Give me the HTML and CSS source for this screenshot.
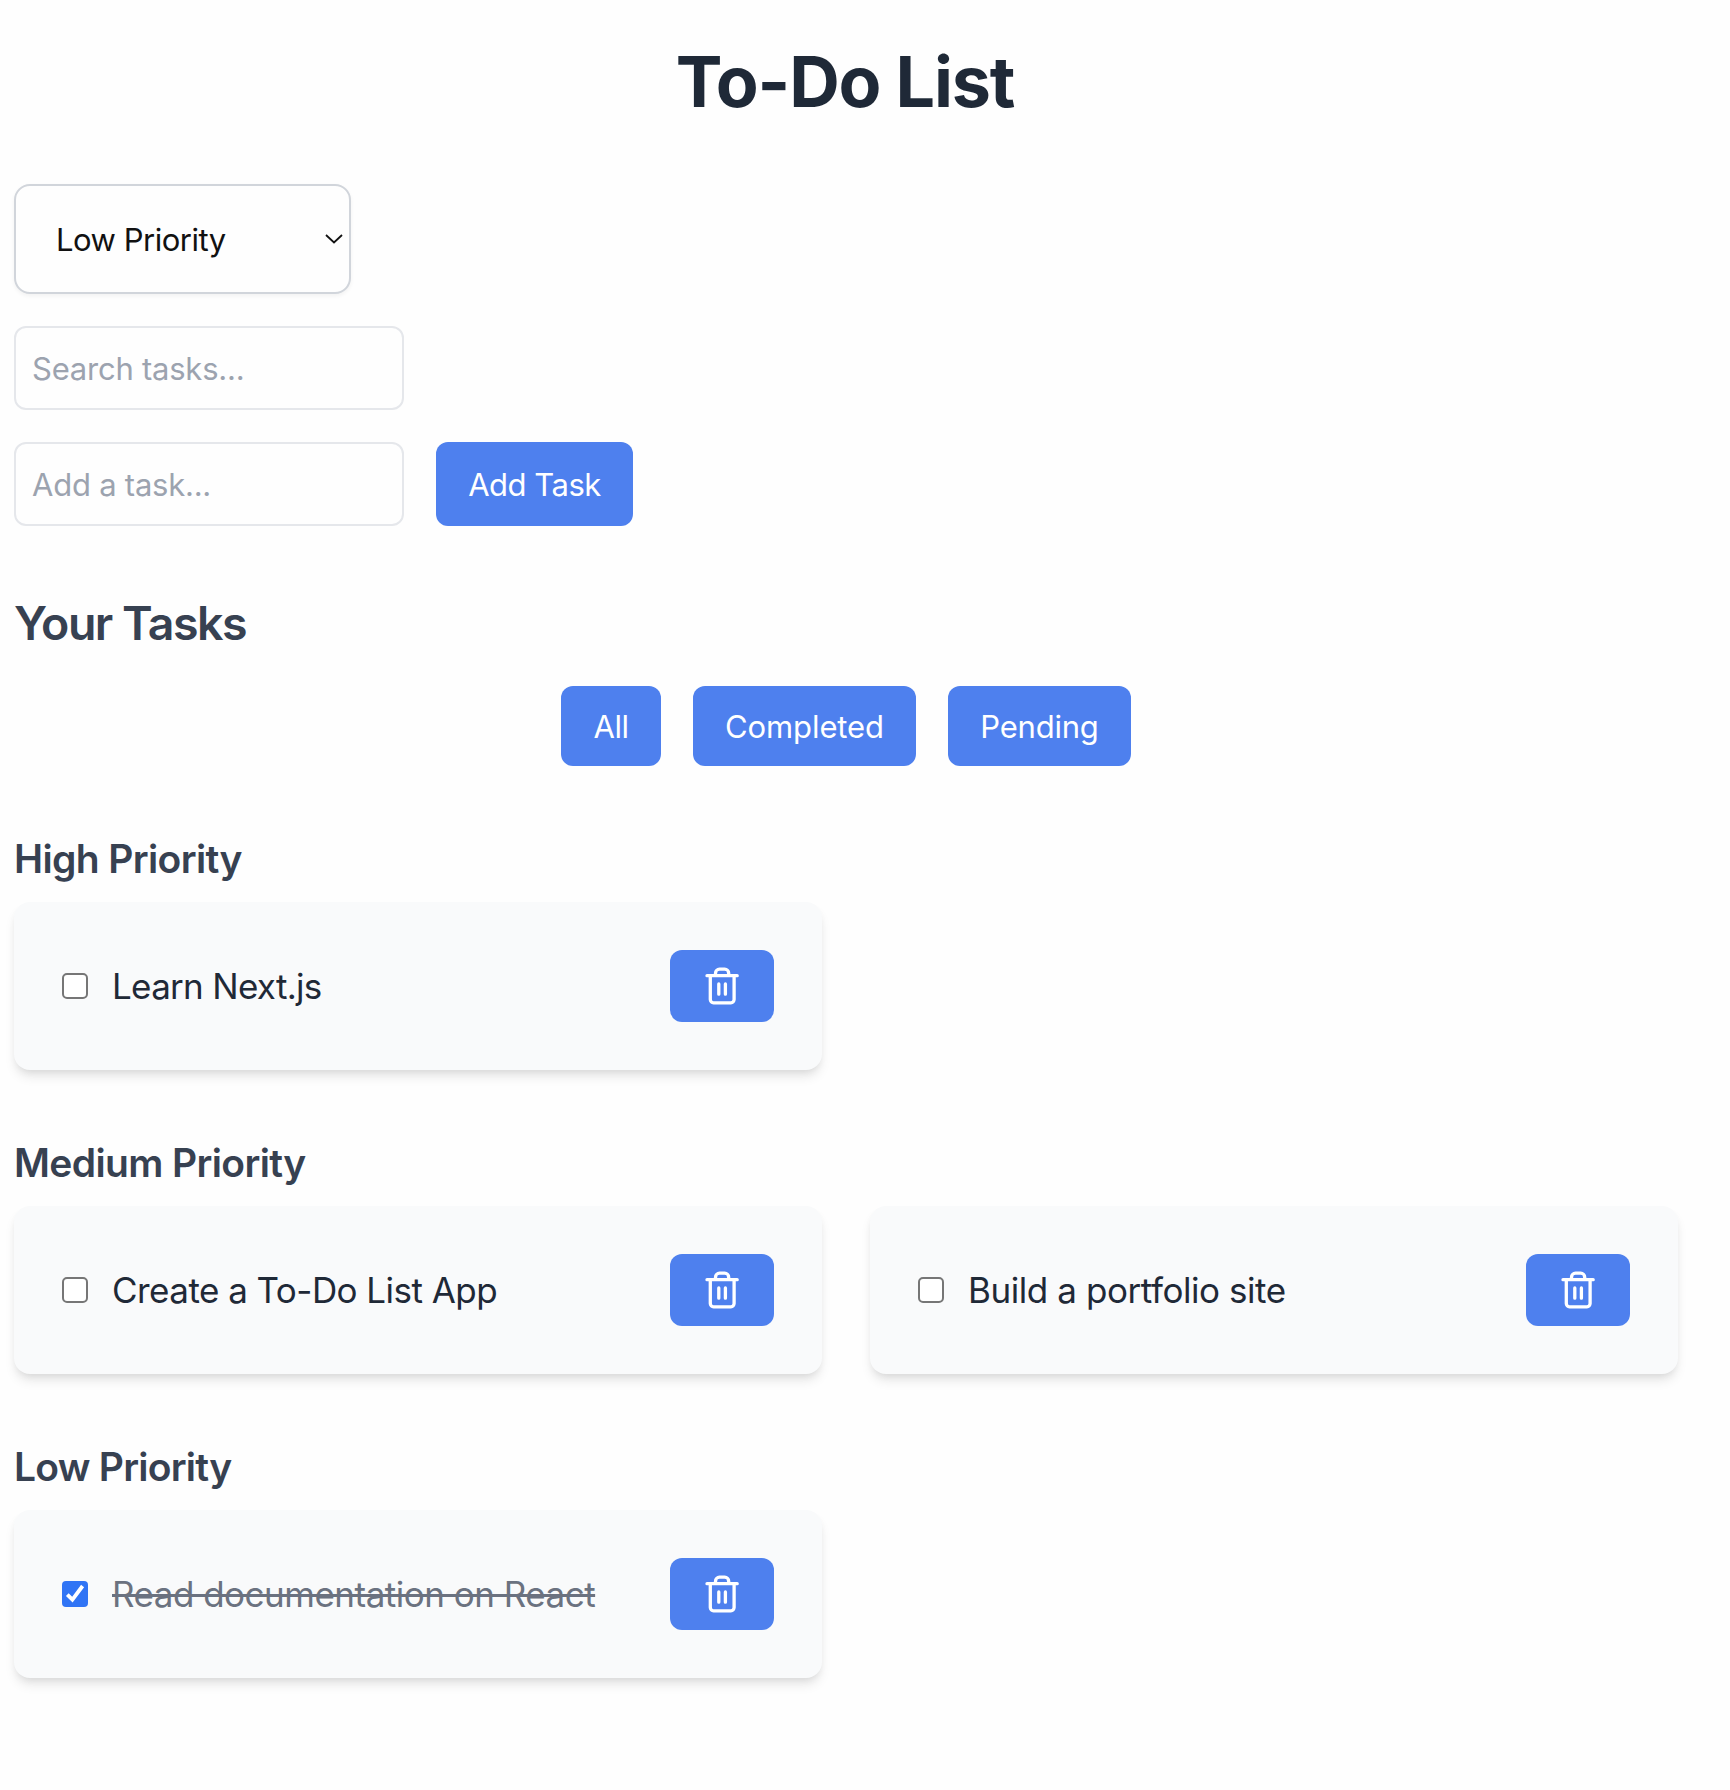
FILE: index.html
```html
<!DOCTYPE html>
<html lang="en">
<head>
<meta charset="utf-8">
<title>To-Do List</title>
<link rel="stylesheet" href="styles.css">
</head>
<body>
<svg class="symbols" aria-hidden="true">
  <symbol id="trash" viewBox="0 0 40 40">
    <path d="M5 9.700H35.200M8.300 9.700V33.600a3.200 3.200 0 0 0 3.200 3.200H28.900a3.200 3.200 0 0 0 3.200-3.200V9.700M13.500 9.700V7.200a4 4 0 0 1 4-4H22.700a4 4 0 0 1 4 4V9.700M16.800 18V28.200M23.400 18V28.200"/>
  </symbol>
</svg>
<main class="page">
  <h1 class="title">To-Do List</h1>

  <div class="select-wrap">
    <select class="select" aria-label="Priority">
      <option>High Priority</option>
      <option>Medium Priority</option>
      <option selected>Low Priority</option>
    </select>
    <svg class="chevron" viewBox="0 0 18 10"><path d="M1 1L9 8.400L17 1"/></svg>
  </div>

  <input class="field" type="text" placeholder="Search tasks...">

  <div class="add-row">
    <input class="field field-add" type="text" placeholder="Add a task...">
    <button class="btn btn-add">Add Task</button>
  </div>

  <h2 class="subtitle">Your Tasks</h2>
  <div class="filters">
    <button class="btn btn-all">All</button>
    <button class="btn btn-completed">Completed</button>
    <button class="btn btn-pending">Pending</button>
  </div>

  <section class="group">
    <h3 class="group-title">High Priority</h3>
    <div class="grid">
      <div class="card">
        <input class="check" type="checkbox"><span class="task task-learn">Learn Next.js</span>
        <button class="delete" aria-label="Delete"><svg class="icon"><use href="#trash"/></svg></button>
      </div>
    </div>
  </section>

  <section class="group">
    <h3 class="group-title">Medium Priority</h3>
    <div class="grid">
      <div class="card">
        <input class="check" type="checkbox"><span class="task">Create a To-Do List App</span>
        <button class="delete" aria-label="Delete"><svg class="icon"><use href="#trash"/></svg></button>
      </div>
      <div class="card">
        <input class="check" type="checkbox"><span class="task task-build">Build a portfolio site</span>
        <button class="delete" aria-label="Delete"><svg class="icon"><use href="#trash"/></svg></button>
      </div>
    </div>
  </section>

  <section class="group">
    <h3 class="group-title group-low">Low Priority</h3>
    <div class="grid">
      <div class="card">
        <span class="check check-on"><svg class="tick" viewBox="0 0 26 26"><path d="M5.300 13.600L10.400 18.600L20.600 5"/></svg></span><span class="task task-done">Read documentation on React</span>
        <button class="delete" aria-label="Delete"><svg class="icon"><use href="#trash"/></svg></button>
      </div>
    </div>
  </section>
</main>
</body>
</html>
```
FILE: styles.css
```css
*, *::before, *::after { box-sizing: border-box; }
body { margin: 0; background: #fefefe; color: #1f2937; font-family: Inter, "Liberation Sans", sans-serif; }
h1, h2, h3 { margin: 0; }
button, input, select { font-family: inherit; margin: 0; }
.symbols { display: none; }

.page { width: 1664px; min-height: 1790px; margin-left: 14px; padding: 42px 0 48px; }
.title { font-size: 70px; line-height: 80px; font-weight: 700; letter-spacing: -1.2px; text-align: center; color: #1f2937; padding-right: 2px; }

.select-wrap { display: grid; width: 337px; margin-top: 62px; align-items: center; }
.select { grid-area: 1 / 1; appearance: none; width: 337px; height: 110px; padding: 0 40px; border: 2px solid #d1d5db; border-radius: 16px; background: #fefefe; color: #111; font-size: 31px; letter-spacing: -0.48px; box-shadow: 0 2px 4px rgba(0, 0, 0, .05); }
.chevron { grid-area: 1 / 1; justify-self: end; width: 18px; height: 10px; margin-right: 8px; fill: none; stroke: #111; stroke-width: 1.8; pointer-events: none; }

.field { display: block; width: 390px; height: 84px; margin-top: 32px; padding: 0 16px; border: 2px solid #e5e7eb; border-radius: 12px; background: #fefefe; font-size: 31px; letter-spacing: -0.23px; color: #1f2937; }
.field::placeholder { color: #9ca3af; opacity: 1; }
.add-row { display: flex; gap: 32px; margin-top: 32px; }
.field-add { margin-top: 0; }

.btn { border: 0; border-radius: 12px; padding: 1px 0 0; background: #4e80ee; color: #fff; font-size: 31px; white-space: nowrap; }
.btn-add { width: 197px; height: 84px; letter-spacing: -0.5px; }

.subtitle { margin-top: 65px; font-size: 46.500px; line-height: 64px; font-weight: 600; letter-spacing: -1.5px; color: #374151; }
.filters { display: flex; justify-content: center; gap: 32px; margin-top: 31px; }
.filters .btn { height: 80px; }
.btn-all { width: 100px; letter-spacing: -0.4px; }
.btn-completed { width: 223px; letter-spacing: -0.1px; }
.btn-pending { width: 183px; letter-spacing: -0.22px; }

.group { margin-top: 65px; }
.group-title { font-size: 39px; line-height: 56px; font-weight: 600; letter-spacing: -0.63px; color: #374151; }
.group-low { letter-spacing: -0.75px; }
.grid { display: grid; grid-template-columns: 1fr 1fr; gap: 48px; margin-top: 15px; }
.card { display: flex; align-items: center; height: 168px; padding: 0 48px; border-radius: 16px; background: #f9fafb; box-shadow: 0 8px 12px -2px rgba(0, 0, 0, .1), 0 4px 8px -4px rgba(0, 0, 0, .1); }
.check { flex: none; appearance: none; width: 26px; height: 26px; border: 2px solid #767676; border-radius: 5px; background: #fff; }
.check-on { border: 0; border-radius: 4px; background: #3074f5; }
.tick { display: block; width: 26px; height: 26px; fill: none; stroke: #fff; stroke-width: 3.8; }
.task { margin-left: 24px; font-size: 35px; line-height: 56px; letter-spacing: -0.54px; color: #1f2937; white-space: nowrap; }
.task-learn { letter-spacing: -0.7px; }
.task-build { letter-spacing: -0.43px; }
.task-done { letter-spacing: -0.5px; color: #6b7280; text-decoration: line-through; text-decoration-thickness: 3px; }
.delete { display: grid; place-items: center; width: 104px; height: 72px; margin-left: auto; padding: 0; border: 0; border-radius: 12px; background: #4e80ee; }
.icon { width: 40px; height: 40px; fill: none; stroke: #fff; stroke-width: 3.3; stroke-linecap: round; stroke-linejoin: round; }
```
